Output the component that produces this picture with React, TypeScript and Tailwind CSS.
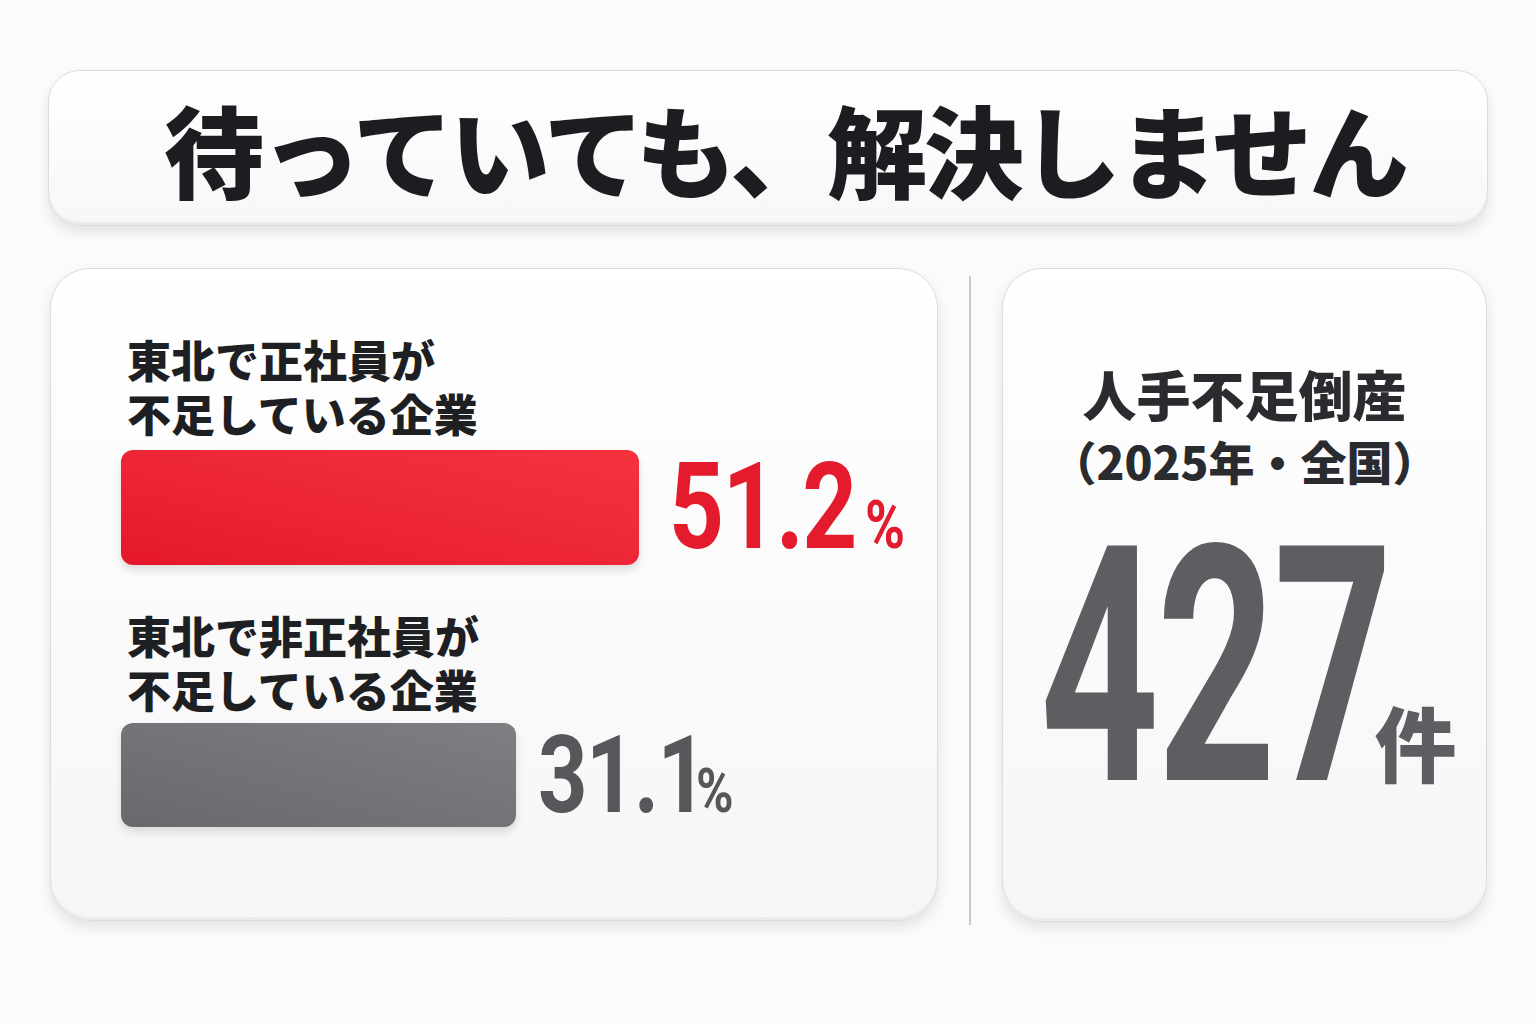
import React from 'react';

const jp = { fontFamily: '"Noto Sans CJK JP", "Noto Sans", sans-serif' };
const num = { fontFamily: 'Roboto, "Liberation Sans", sans-serif' };

const cardClass =
  'rounded-[40px] border border-[#dcdcdc] bg-gradient-to-b from-[#ffffff] to-[#f6f6f6] shadow-[0_6px_14px_rgba(0,0,0,0.10),inset_0_-3px_0_rgba(0,0,0,0.04),inset_0_2px_0_#ffffff]';

const bars = [
  {
    label: ['東北で正社員が', '不足している企業'],
    value: '51.2',
    barWidth: 518,
    barClass: 'h-[115px] bg-gradient-to-tr from-[#e5172b] to-[#f6323f]',
    textClass: 'text-[#e31b2d]',
    numSize: 'text-[120px]',
    numWidth: 'w-[190px]',
    pctSize: 'text-[66px]',
    gap: 'ml-[30px]',
    top: 'mt-0',
    barTop: 'mt-[7px]',
  },
  {
    label: ['東北で非正社員が', '不足している企業'],
    value: '31.1',
    barWidth: 395,
    barClass: 'h-[104px] bg-gradient-to-tr from-[#67696c] to-[#7d7f82]',
    textClass: 'text-[#55575b]',
    numSize: 'text-[108px]',
    numWidth: 'w-[152px]',
    pctSize: 'text-[62px]',
    gap: 'ml-[22px]',
    top: 'mt-[41px]',
    barTop: 'mt-[5px]',
  },
];

const App = () => {
  return (
    <div className="w-[1536px] h-[1024px] bg-[#fbfbfb] px-[48px] pt-[70px]" style={jp}>
      {/* heading */}
      <div className="h-[156px] rounded-[32px] border border-[#dcdcdc] bg-gradient-to-b from-[#ffffff] to-[#f7f7f7] shadow-[0_6px_12px_rgba(0,0,0,0.10),inset_0_-3px_0_rgba(0,0,0,0.05)] flex items-center justify-center pl-[34px]">
        <h1 className="text-[100px] font-black tracking-[-3px] leading-none text-[#1c1d21]">
          待っていても、解決しません
        </h1>
      </div>

      <div className="mt-[42px] flex">
        {/* left: bars */}
        <div className={`${cardClass} ml-[2px] w-[888px] h-[653px] pl-[70px] pt-[63px]`}>
          {bars.map((b, i) => (
            <div key={i} className={b.top}>
              <div className="pl-[6px] text-[44px] font-black leading-[54px] text-[#1e1f22]">
                {b.label.map((l) => (
                  <div key={l}>{l}</div>
                ))}
              </div>
              <div className={`${b.barTop} flex items-center`}>
                <div
                  className={`${b.barClass} rounded-[12px] shadow-[0_5px_8px_rgba(0,0,0,0.12)]`}
                  style={{ width: b.barWidth }}
                />
                <div className={`${b.gap} flex items-baseline ${b.textClass} font-bold`} style={num}>
                  <div className={`${b.numWidth} ${b.numSize} leading-none`}>
                    <span className="inline-block origin-left scale-x-[0.8] whitespace-nowrap tracking-[-2px]">
                      {b.value}
                    </span>
                  </div>
                  <div className={`${b.pctSize} leading-none ml-[6px]`}>
                    <span className="inline-block origin-left scale-x-[0.82]">%</span>
                  </div>
                </div>
              </div>
            </div>
          ))}
        </div>

        {/* divider */}
        <div className="w-[64px] flex justify-center">
          <div className="mt-[8px] w-[2px] h-[649px] bg-[#cacaca]" />
        </div>

        {/* right: bankruptcies */}
        <div className={`${cardClass} w-[485px] h-[654px] flex flex-col items-center pt-[92px]`}>
          <div className="text-[54px] font-black leading-[66px] text-[#2a2b2e]">人手不足倒産</div>
          <div className="text-[46px] font-black leading-[66px] text-[#2a2b2e]">（2025年・全国）</div>
          <div className="mt-[10px] flex items-baseline pl-[8px] text-[#5c5e61]">
            <div className="w-[346px] text-[330px] font-bold leading-none" style={num}>
              <span className="inline-block origin-left scale-x-[0.63] whitespace-nowrap tracking-[-4px]">427</span>
            </div>
            <div className="-ml-[12px] -translate-y-[4px] text-[82px] font-black leading-none">件</div>
          </div>
        </div>
      </div>
    </div>
  );
};

export default App;
